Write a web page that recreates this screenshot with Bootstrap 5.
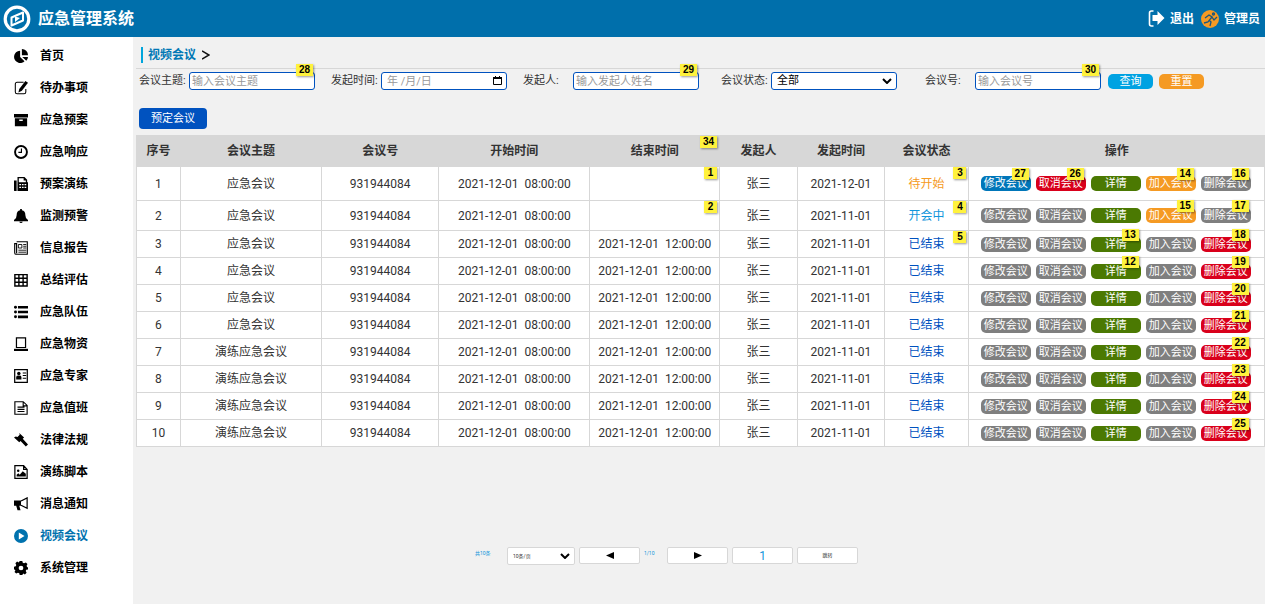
<!DOCTYPE html>
<html lang="zh-CN">
<head>
<meta charset="utf-8">
<meta name="viewport" content="width=device-width, initial-scale=1">
<title>应急管理系统</title>
<link href="https://cdn.jsdelivr.net/npm/bootstrap@5.3.0/dist/css/bootstrap.min.css" rel="stylesheet">
<style>
body{font-family:Roboto,"Noto Sans CJK SC",sans-serif;font-size:12px;line-height:16px;color:#333;background:#f1f1f1}
.topbar{background:#006fab;height:37px;padding:0 5px 0 3px;gap:7px}
.topbar h1{font-size:16px;line-height:20px}
.topbar nav{gap:7px}
.topbar a{font-size:12px;gap:5px}
.side{width:133px;background:#fff;padding-top:3px}
.side a{height:32px;gap:12px;padding-left:14px;color:#000;font-weight:700;text-decoration:none}
.side a.active{color:#0072ae}
.side svg{width:14px;height:14px}
.main{min-width:0;padding-left:3px}
.crumbs{height:32px;padding:4px 0 0 5px;border-bottom:1px solid #d7d7d7}
.crumbs a{border-left:2px solid #00a5dc;padding-left:5px;color:#0078b5;font-weight:700;text-decoration:none}
.crumbs svg{width:8px;height:10px;margin-left:6px}
.filters{padding:3px 3px 0;column-gap:16px;font-size:11px}
.filters label{width:50px;white-space:nowrap}
.field{width:126px}
.gap-s{margin-left:6px}
.gap-m{margin-left:12px}
.field .form-control,.field .form-select{height:18px;min-height:0;padding:0 2px;font-size:11px;line-height:16px;border:1px solid #0052bf;border-radius:3px;background-color:#fff;color:#000}
.field .form-control::placeholder{color:#999}
.field .form-control.date{padding-left:5px}
.field .form-select{padding-left:5px}
.form-select{background-image:url("data:image/svg+xml,%3csvg xmlns='http://www.w3.org/2000/svg' viewBox='0 0 10 6'%3e%3cpath fill='none' stroke='%23000' stroke-width='2' d='m1 1 4 4 4-4'/%3e%3c/svg%3e");background-size:10px 6px;background-position:right 4px center}
.cal{position:absolute;right:5px;top:4px;width:9px;height:10px;pointer-events:none}
.pill{height:15px;padding:0;border:0;border-radius:5px;font-size:11px;line-height:15px;color:#fff;text-align:center;white-space:nowrap}
.filters .pill{width:45px}
.filters .actions{gap:6px;margin-left:-9px}
.acts{gap:5px;padding-right:2px}
.acts .pill{width:50px}
.cyan{background:#00a2e2}.orange{background:#f59a23}.blue{background:#0076b9}.red{background:#d9001b}.green{background:#4b7902}.grey{background:#7f7f7f}
.book{height:21px;margin:18px 0 6px 3px;padding:0 12px;border:0;border-radius:4px;background:#0052bf;color:#fff;font-size:11px;line-height:21px}
.note{position:absolute;top:0;right:2px;padding:0 3px;min-width:13px;background:#fff23d;color:#000;font:700 10px/12px "Liberation Sans",sans-serif;text-align:center;box-shadow:1px 1px 2px rgba(0,0,0,.4);z-index:1}
.pill .note,.field .note{top:-8px}
.meet{table-layout:fixed;text-align:center;background:#fff;border-collapse:collapse;color:#333}
.meet th,.meet td{position:relative;padding:0;border:1px solid #d7d7d7;white-space:pre;vertical-align:middle}
.meet th{background:#d7d7d7;height:31px}
.meet td{height:27px}
.meet tr.r1 td{height:34px}
.meet tr.r2 td{height:30px}
.s-wait{color:#f59a23}.s-live{color:#1296db}.s-done{color:#0052bf}
.pager{margin-top:100px;padding-right:68px;gap:4px;color:#1296db}
.pager small{font-size:5px;line-height:12px;white-space:nowrap}
.pager .total{width:28px}
.pager .pagecount{width:19px}
.pager .ctl{width:61px;height:17px;min-height:0;border:1px solid #d7d7d7;border-radius:2px;background-color:#fff;font-size:5px;line-height:15px;padding:0;text-align:center;color:#333}
.pager .form-select.ctl{width:68px;height:18px;text-align:left;padding-left:5px}
.pager input.ctl{font-size:12px;color:#1296db}
.pager svg{width:8px;height:7px;display:block;margin:auto}
</style>
</head>
<body class="d-flex flex-column min-vh-100">
<header class="topbar d-flex align-items-center">
  <svg width="28" height="28" viewBox="0 0 28 28" fill="none" stroke="#fff" aria-hidden="true"><circle cx="14" cy="14" r="11.800" stroke-width="3.200"/><path d="M20 7.500v8L8.500 20.500v-8z" stroke-width="2" stroke-linejoin="round"/><path d="M12 11.500 17 13l-5 4z" fill="#fff" stroke="none"/></svg>
  <h1 class="fw-bold text-white mb-0">应急管理系统</h1>
  <nav class="d-flex align-items-center ms-auto fw-bold">
    <a href="#" class="d-flex align-items-center text-white text-decoration-none"><svg width="17" height="17" viewBox="0 0 16 17" aria-hidden="true"><path d="M5 1H3Q1 1 1 3v11q0 2 2 2h2" fill="none" stroke="#fff" stroke-width="1.600"/><path d="M4 5h5V1l7 7-7 7v-4H4z" fill="#fff"/></svg>退出</a>
    <a href="#" class="d-flex align-items-center text-white text-decoration-none"><svg width="18" height="18" viewBox="0 0 18 18" aria-hidden="true"><circle cx="9" cy="9" r="9" fill="#f59a23"/><g fill="none" stroke="#1b567c" stroke-width="1.300"><circle cx="12.500" cy="4" r="1"/><path d="m4 8 4-3 3 2-4 5-4 1M8 10l2 2-1 4M11 7l2 3 3-3"/></g></svg>管理员</a>
  </nav>
</header>
<div class="d-flex flex-grow-1">
  <nav class="side flex-shrink-0 d-flex flex-column" id="side"></nav>
  <main class="main flex-grow-1">
    <nav class="crumbs d-flex align-items-center"><a href="#">视频会议</a><svg viewBox="0 0 8 10" aria-hidden="true"><path d="m0 1 7 4-7 4" fill="none" stroke="#111" stroke-width="1.500"/></svg></nav>
    <form class="filters d-flex flex-wrap align-items-center">
      <div class="d-flex align-items-center"><label for="topic">会议主题:</label><div class="field position-relative"><input id="topic" class="form-control" placeholder="输入会议主题"><span class="note">28</span></div></div>
      <div class="d-flex align-items-center"><label for="start">发起时间:</label><div class="field position-relative"><input id="start" class="form-control date" placeholder="年 /月/日"><svg class="cal" viewBox="0 0 9 10" aria-hidden="true"><path d="M.5 1.500h8v7h-8z" fill="none" stroke="#000"/><path d="M0 1h9v2H0zM2 0h1v1H2zM6 0h1v1H6z"/></svg></div></div>
      <div class="d-flex align-items-center"><label for="host">发起人:</label><div class="field position-relative"><input id="host" class="form-control" placeholder="输入发起人姓名"><span class="note">29</span></div></div>
      <div class="d-flex align-items-center gap-s"><label for="state">会议状态:</label><div class="field"><select id="state" class="form-select"><option>全部</option></select></div></div>
      <div class="d-flex align-items-center gap-m"><label for="num">会议号:</label><div class="field position-relative"><input id="num" class="form-control" placeholder="输入会议号"><span class="note">30</span></div></div>
      <div class="actions d-flex"><button type="button" class="pill cyan">查询</button><button type="reset" class="pill orange">重置</button></div>
    </form>
    <button type="button" class="book">预定会议</button>
    <table class="meet w-100">
      <colgroup><col style="width:3.900%"><col style="width:12.500%"><col style="width:10.400%"><col style="width:13.400%"><col style="width:11.500%"><col style="width:6.900%"><col style="width:7.700%"><col style="width:7.500%"><col></colgroup>
      <thead><tr><th>序号</th><th>会议主题</th><th>会议号</th><th>开始时间</th><th>结束时间<span class="note">34</span></th><th>发起人</th><th>发起时间</th><th>会议状态</th><th>操作</th></tr></thead>
      <tbody id="rows"></tbody>
    </table>
    <div class="pager d-flex justify-content-center">
      <small class="total">共10条</small>
      <select class="form-select ctl" aria-label="每页条数" id="size"><option>10条/页</option></select>
      <button type="button" class="ctl" aria-label="上一页"><svg viewBox="0 0 8 7"><path d="M8 0v7L0 3.500z"/></svg></button>
      <small class="pagecount">1/10</small>
      <button type="button" class="ctl" aria-label="下一页"><svg viewBox="0 0 8 7"><path d="M0 0v7l8-3.500z"/></svg></button>
      <input class="ctl" value="1" aria-label="页码">
      <button type="button" class="ctl">跳转</button>
    </div>
  </main>
</div>
<script>
const menu = [
 ['首页','<path d="M7 2v7l5 5A7 7 0 1 1 7 2z"/><path d="M9 0a7 7 0 0 1 7 7H9zM9.500 9H16a7 7 0 0 1-2 4.500z"/>'],
 ['待办事项','<path d="M11 1.500H3.500q-2 0-2 2v9q0 2 2 2h8q2 0 2-2V9" fill="none" stroke="currentColor" stroke-width="1.200"/><path d="m13 0 3 2-7 9-4 2 1-4z"/>'],
 ['应急预案','<path d="M0 1h16v4H0zM1 6h14v9H1zm5 1.500v1.500h4V7.500z" fill-rule="evenodd"/>'],
 ['应急响应','<circle cx="8" cy="8" r="6.800" fill="none" stroke="currentColor" stroke-width="2.200"/><path d="M8.500 4v4.500H5" fill="none" stroke="currentColor" stroke-width="1.300"/>'],
 ['预案演练','<path d="M0 4h3v12H1q-1 0-1-1zM4 0h8l3 3v3h1v10H4zm1.500 1.500V6h8V4H11V1.500zM6 8v1.500h2V8zm3 0v1.500h2V8zm3 0v1.500h2V8zm-6 3v1.500h2V11zm3 0v1.500h2V11zm3 0v1.500h2V11z" fill-rule="evenodd"/>'],
 ['监测预警','<path d="M7 0h2v1.500q4 .8 4 5.500 0 4 3 5.500V14H0v-1.500q3-1.500 3-5.500 0-4.700 4-5.500zM6 14.500h4q-.5 1.500-2 1.500t-2-1.500z"/>'],
 ['信息报告','<path d="M3 .8h12.200v14.400H2Q.8 15 .8 13V3H3v11" fill="none" stroke="currentColor" stroke-width="1.300"/><path d="M5 4h4v4H5zM10.500 4H14M10.500 6H14M10.500 8H14M5 10.500h9M5 12.800h9" fill="none" stroke="currentColor"/>'],
 ['总结评估','<path d="M1 1.800h14v13H1zM1 6h14M1 10.500h14M5.600 2v13M10.400 2v13" fill="none" stroke="currentColor" stroke-width="1.600"/>'],
 ['应急队伍','<path d="M4.500 1H16v3H4.500zM4.500 6.500H16v3H4.500zM4.500 12H16v3H4.500z"/><circle cx="1.700" cy="2.500" r="1.700"/><circle cx="1.700" cy="8" r="1.700"/><circle cx="1.700" cy="13.500" r="1.700"/>'],
 ['应急物资','<path d="M2.800 1h10.400v11H2.800z" fill="none" stroke="currentColor" stroke-width="1.400"/><path d="M0 13.500h16V16H0z"/>'],
 ['应急专家','<path d="M.8.8h14.400v14.400H.8z" fill="none" stroke="currentColor" stroke-width="1.400"/><circle cx="5.500" cy="5" r="2"/><path d="M2.500 12V9q0-1.500 3-1.500t3 1.500v3z"/><path d="M10 4.500h4M10 7.500h4M10 10.500h4" stroke="currentColor" stroke-width="1.200"/>'],
 ['应急值班','<path d="M1 .8h9.500L15 5v10.200H1zM10.500 1v4.500H15M4 7h8M4 9.500h8M4 12h8" fill="none" stroke="currentColor" stroke-width="1.300"/>'],
 ['法律法规','<path d="m6 0 5.500 5L10 6.500l6 6.500-2.500 2.500L7.500 9 6 10.500 0 5l2-1 2 .5L6.500 2z"/>'],
 ['演练脚本','<path d="M1 .8h10L15 5v10.200H1zM11 1v4h4" fill="none" stroke="currentColor" stroke-width="1.400"/><circle cx="4.800" cy="6.500" r="1.400"/><path d="M3 13v-2l2-1.500 1.500 1.500L10 7l3.500 3v3z"/>'],
 ['消息通知','<path d="M0 4h8v6H6l1.500 5H4L2.500 10H0z"/><path d="M8 4.500 15 1v12L8 9.500" fill="none" stroke="currentColor" stroke-width="1.400"/>'],
 ['视频会议','<path d="M8 0a8 8 0 1 1 0 16A8 8 0 0 1 8 0zM5.500 4v8L12 8z" fill-rule="evenodd"/>'],
 ['系统管理','<path d="M6.500 0h3l.5 2 1.500.6 2-1 1.900 1.900-1 2L15 7l1 .2v2.600L14 10l-.6 1.500 1 2-1.900 1.900-2-1L9.500 16h-3L6 14l-1.500-.6-2 1-1.900-1.900 1-2L0 9.500v-3L2 6l.6-1.500-1-2L3.500.6l2 1zM8 5.300a2.700 2.700 0 1 0 0 5.400 2.700 2.700 0 0 0 0-5.400z" fill-rule="evenodd"/>']
];
document.getElementById('side').innerHTML = menu.map(([t,p]) =>
 `<a href="#" class="d-flex align-items-center${t==='视频会议'?' active':''}"><svg viewBox="0 0 16 16" fill="currentColor" aria-hidden="true">${p}</svg>${t}</a>`).join('');

const note = n => n ? `<span class="note">${n}</span>` : '';
const states = {wait:'待开始', live:'开会中', done:'已结束'};
const labels = ['修改会议','取消会议','详情','加入会议','删除会议'];
let html = '';
for (let i = 1; i <= 10; i++) {
  const state = i === 1 ? 'wait' : i === 2 ? 'live' : 'done';
  const colours = {wait:['blue','red','green','orange','grey'], live:['grey','grey','green','orange','grey'], done:['grey','grey','green','grey','red']}[state];
  const notes = i === 1 ? [27,26,0,14,16] : i === 2 ? [0,0,0,15,17] : [0,0,{3:13,4:12}[i],0,15+i];
  const acts = labels.map((l,k) => `<button type="button" class="pill position-relative ${colours[k]}">${l}${note(notes[k])}</button>`).join('');
  html += `<tr class="r${i}"><td>${i}</td><td>${i>6?'演练':''}应急会议</td><td>931944084</td><td>2021-12-01  08:00:00</td>`
    + `<td>${i>2?'2021-12-01  12:00:00':note(i)}</td><td>张三</td><td>${i===1?'2021-12-01':'2021-11-01'}</td>`
    + `<td class="s-${state}">${states[state]}${i<4?note(i+2):''}</td><td><div class="acts d-flex justify-content-center">${acts}</div></td></tr>`;
}
document.getElementById('rows').innerHTML = html;
</script>
<script src="https://cdn.jsdelivr.net/npm/bootstrap@5.3.0/dist/js/bootstrap.bundle.min.js"></script>
</body>
</html>
